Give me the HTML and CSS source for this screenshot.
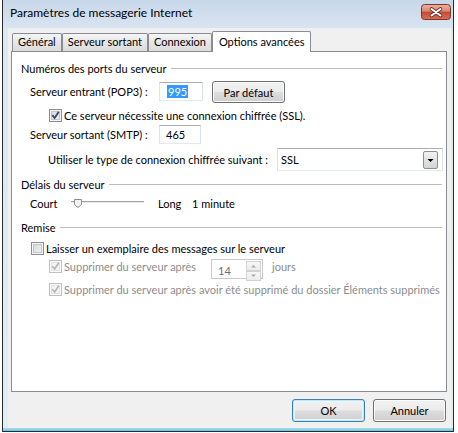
FILE: index.html
```html
<!DOCTYPE html>
<html lang="fr">
<head>
<meta charset="utf-8">
<title>Paramètres de messagerie Internet</title>
<link rel="stylesheet" href="styles.css">
</head>
<body>
<div class="window">
  <div class="titlebar">
    <span class="title">Paramètres de messagerie Internet</span>
    <span class="close">
      <svg width="30" height="16" viewBox="0 0 30 16">
        <defs>
          <linearGradient id="cg" x1="0" y1="0" x2="0" y2="1">
            <stop offset="0" stop-color="#eab1a4"/>
            <stop offset="0.45" stop-color="#d98672"/>
            <stop offset="0.5" stop-color="#c5492f"/>
            <stop offset="1" stop-color="#d8715a"/>
          </linearGradient>
        </defs>
        <rect x="0.5" y="0.5" width="29" height="15" rx="3" fill="url(#cg)" stroke="#7d3528"/>
        <path d="M10.5 5 L19.5 11.5 M19.5 5 L10.5 11.5" stroke="#6b2c22" stroke-width="3.6" stroke-linecap="round"/>
        <path d="M10.5 5 L19.5 11.5 M19.5 5 L10.5 11.5" stroke="#ffffff" stroke-width="2" stroke-linecap="round"/>
      </svg>
    </span>
  </div>
  <div class="frame">
    <div class="client">
      <div class="tabs">
        <div class="tab">Général</div>
        <div class="tab">Serveur sortant</div>
        <div class="tab">Connexion</div>
        <div class="tab active">Options avancées</div>
      </div>
      <div class="panel">
        <div class="group-head">Numéros des ports du serveur</div>

        <div class="row r-pop">
          <span class="lbl">Serveur entrant (POP3) :</span>
          <span class="field port-in"><span class="sel">995</span></span>
          <span class="btn btn-default-port">Par défaut</span>
        </div>

        <div class="row r-ssl">
          <span class="cb"><svg width="11" height="11" viewBox="0 0 11 11"><path d="M2.3 5.2 L4.6 8 L8.8 1.8" fill="none" stroke="#3b4a72" stroke-width="1.9"/></svg></span>
          <span class="cb-text">Ce serveur nécessite une connexion chiffrée (SSL).</span>
        </div>

        <div class="row r-smtp">
          <span class="lbl">Serveur sortant (SMTP) :</span>
          <span class="field port-out">465</span>
        </div>

        <div class="row r-enc">
          <span class="lbl-enc">Utiliser le type de connexion chiffrée suivant :</span>
          <span class="combo">
            <span>SSL</span>
            <span class="combo-btn"><svg width="13" height="16" viewBox="0 0 13 16"><path d="M3.5 7 L9.5 7 L6.5 10 Z" fill="#000"/></svg></span>
          </span>
        </div>

        <div class="group-head g-delay">Délais du serveur</div>

        <div class="row r-slider">
          <span class="s-court">Court</span>
          <svg class="slider" width="74" height="10" viewBox="0 0 74 10">
            <rect x="0" y="2" width="74" height="1" fill="#a3a3a3"/>
            <rect x="0" y="3" width="74" height="1" fill="#e8e8e8"/>
            <rect x="73" y="2" width="1" height="2" fill="#ffffff"/>
            <path d="M3.5 0.5 H10.5 V5.5 L7 8.5 L3.5 5.5 Z" fill="#f3f3f3" stroke="#8c8c8c"/>
          </svg>
          <span class="s-long">Long</span>
          <span>1 minute</span>
        </div>

        <div class="group-head g-remise">Remise</div>

        <div class="row r-keep">
          <span class="cb"></span>
          <span class="cb-text">Laisser un exemplaire des messages sur le serveur</span>
        </div>

        <div class="row r-del">
          <span class="del-group">
            <span class="cb disabled"><svg width="11" height="11" viewBox="0 0 11 11"><path d="M2.3 5.2 L4.6 8 L8.8 1.8" fill="none" stroke="#b4b4b4" stroke-width="1.6"/></svg></span>
            <span class="cb-text muted">Supprimer du serveur après</span>
          </span>
          <span class="spin">
            <span class="spin-val">14</span>
            <span class="spin-btns">
              <span class="spin-b"><svg width="13" height="8" viewBox="0 0 13 8"><path d="M4 5.5 L9 5.5 L6.5 3 Z" fill="#a8a8a8"/></svg></span>
              <span class="spin-b"><svg width="13" height="8" viewBox="0 0 13 8"><path d="M4 2.5 L9 2.5 L6.5 5 Z" fill="#a8a8a8"/></svg></span>
            </span>
          </span>
          <span class="muted jours">jours</span>
        </div>

        <div class="row r-del2">
          <span class="cb disabled"><svg width="11" height="11" viewBox="0 0 11 11"><path d="M2.3 5.2 L4.6 8 L8.8 1.8" fill="none" stroke="#b4b4b4" stroke-width="1.6"/></svg></span>
          <span class="cb-text muted">Supprimer du serveur après avoir été supprimé du dossier Éléments supprimés</span>
        </div>
      </div>

      <div class="buttons">
        <span class="btn btn-ok">OK</span>
        <span class="btn">Annuler</span>
      </div>
    </div>
  </div>
</div>
</body>
</html>
```
FILE: styles.css
```css
* { box-sizing: border-box; }

body {
  margin: 0;
  background: #ffffff;
  font: 11px Lato, "DejaVu Sans", sans-serif;
  color: #000;
}

.window {
  margin-left: 2px;
  width: 452px;
  height: 432px;
  border: 1px solid #2b2b2b;
  border-top: none;
  display: flex;
  flex-direction: column;
  background: #dbe6f2;
}

.titlebar {
  height: 28px;
  flex: none;
  display: flex;
  justify-content: space-between;
  align-items: flex-start;
  padding: 0 2px 0 7px;
  background: linear-gradient(#c8d7e9, #d9e4f1);
}

.title {
  line-height: 26px;
  font-size: 12px;
}

.close {
  margin-top: 4px;
  width: 30px;
  height: 16px;
  display: block;
}
.close svg { display: block; }

.frame {
  flex: 1;
  padding: 0 2px 3px 5px;
  background: linear-gradient(to top, #69c6e2 0, #a9ddee 3px, #e3ebf4 3px, #dde7f2 100%);
}

.client {
  height: 100%;
  background: #f0f0f0;
  padding: 3px 4px 0 3px;
  display: flex;
  flex-direction: column;
}

.tabs {
  height: 20px;
  flex: none;
  display: flex;
  align-items: flex-end;
  padding-left: 1px;
  position: relative;
  z-index: 1;
}

.tab {
  height: 18px;
  line-height: 16px;
  padding: 0 5px;
  border: 1px solid #898c95;
  border-bottom: none;
  border-radius: 2px 2px 0 0;
  background: linear-gradient(#f6f6f6, #e6e6e6 50%, #dcdcdc);
  white-space: nowrap;
}

.tab.active {
  height: 21px;
  line-height: 19px;
  margin-bottom: -1px;
  padding: 0 6px;
  background: #fff;
}

.panel {
  height: 341px;
  flex: none;
  background: #fff;
  border: 1px solid #898c95;
  padding: 8px 3px 0 9px;
  display: flex;
  flex-direction: column;
}

.group-head {
  height: 16px;
  display: flex;
  align-items: center;
  gap: 4px;
  white-space: nowrap;
}
.group-head::after {
  content: "";
  flex: 1;
  height: 1px;
  margin-right: 1px;
  background: #bdbdbd;
}

.row {
  display: flex;
  align-items: center;
  white-space: nowrap;
}

.lbl { width: 138px; padding-left: 9px; }

.field {
  display: flex;
  align-items: center;
  background: #fff;
  border: 1px solid #abadb3;
  border-color: #abadb3 #dbdfe6 #e3e9ef #e2e3ea;
  padding-left: 6px;
}

.r-pop { margin-top: 5px; height: 22px; align-items: flex-start; }
.r-pop .lbl { line-height: 22px; }
.port-in { width: 44px; height: 19px; margin-top: 1px; }
.sel {
  display: inline-block;
  height: 13px;
  line-height: 13px;
  padding: 0 1px;
  margin-left: 1px;
  background: #3399ff;
  color: #fff;
}

.btn {
  display: flex;
  align-items: center;
  justify-content: center;
  width: 73px;
  height: 23px;
  border: 1px solid #707070;
  border-radius: 3px;
  background: linear-gradient(#f2f2f2 0, #ebebeb 48%, #dddddd 52%, #cfcfcf 100%);
  box-shadow: inset 0 0 0 1px #fbfbfb;
}
.btn-default-port { margin-left: 9px; height: 22px; }

.r-ssl { margin-top: 5px; height: 15px; padding-left: 28px; }

.cb {
  width: 13px;
  height: 13px;
  flex: none;
  border: 1px solid #8e8f8f;
  background: linear-gradient(135deg, #cfd3d8, #f7f7f7);
  box-shadow: inset 0 0 0 1px #f4f4f4, inset 0 0 0 2px #c4c7cb;
  margin-right: 2px;
}
.cb svg { display: block; }
.cb.disabled {
  border-color: #c0c0c0;
  background: #f4f4f4;
  box-shadow: inset 0 0 0 1px #fafafa, inset 0 0 0 2px #e2e2e2;
}

.muted { color: #8d8d8d; }

.r-smtp { margin-top: 2px; height: 19px; }
.port-out { width: 42px; height: 19px; }

.r-enc { margin-top: 4px; height: 23px; }
.lbl-enc { width: 256px; padding-left: 27px; }
.combo {
  width: 166px;
  height: 23px;
  display: flex;
  align-items: center;
  justify-content: space-between;
  background: #fff;
  border: 1px solid #abadb3;
  border-color: #abadb3 #dbdfe6 #e3e9ef #e2e3ea;
  padding: 0 4px 0 3px;
}
.combo-btn {
  width: 15px;
  height: 18px;
  display: flex;
  align-items: center;
  justify-content: center;
  border: 1px solid #8e8f8f;
  border-radius: 2px;
  background: linear-gradient(#f2f2f2, #e3e3e3 50%, #d3d3d3);
}
.combo-btn svg { display: block; }

.g-delay { margin-top: 5px; }

.r-slider { margin-top: 3px; height: 16px; padding-left: 9px; }
.s-court { width: 41px; }
.slider { display: block; flex: none; margin-top: 1px; }
.s-long { width: 34px; margin-left: 13px; }

.g-remise { margin-top: 8px; }

.r-keep { margin-top: 6px; height: 15px; padding-left: 10px; }

.r-del { margin-top: 3px; height: 20px; padding-left: 28px; align-items: flex-start; }
.del-group { width: 162px; height: 15px; display: flex; align-items: center; }
.spin {
  width: 52px;
  height: 20px;
  display: flex;
  justify-content: space-between;
  background: #fff;
  border: 1px solid #c8cacf;
  padding: 1px 1px 1px 6px;
}
.spin-val { color: #6d6d6d; line-height: 17px; margin-top: 1px; }
.spin-btns { display: flex; flex-direction: column; width: 15px; }
.spin-b {
  flex: 1;
  border: 1px solid #d2d2d2;
  background: linear-gradient(#f7f7f7, #ececec);
  display: flex;
  align-items: center;
  justify-content: center;
}
.spin-b svg { display: block; }
.jours { margin-left: 9px; line-height: 15px; }

.r-del2 { margin-top: 3px; height: 15px; padding-left: 28px; }

.buttons {
  margin-top: 7px;
  display: flex;
  justify-content: flex-end;
  gap: 8px;
  padding-right: 1px;
}
.btn-ok {
  border-color: #3c7fb1;
  box-shadow: inset 0 0 0 1px #bfe7f8, inset 0 0 0 2px #eaf6fd;
}
```
